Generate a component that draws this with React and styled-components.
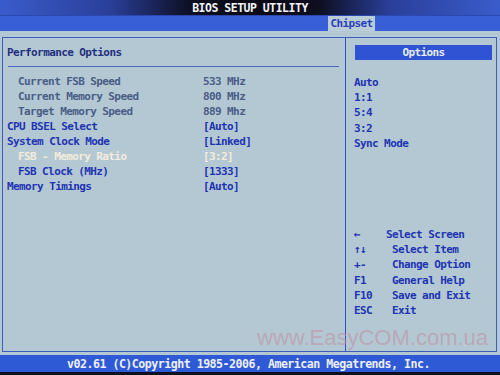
import styled, { createGlobalStyle } from "styled-components"

const GlobalStyle = createGlobalStyle`
  html, body {
    margin: 0;
    padding: 0;
    background: #0c0c18;
  }
`

const settings = [
  { label: "Current FSB Speed", value: "533 MHz", kind: "info", sub: true },
  { label: "Current Memory Speed", value: "800 MHz", kind: "info", sub: true },
  { label: "Target Memory Speed", value: "889 Mhz", kind: "info", sub: true },
  { label: "CPU BSEL Select", value: "[Auto]", kind: "item" },
  { label: "System Clock Mode", value: "[Linked]", kind: "item" },
  { label: "FSB - Memory Ratio", value: "[3:2]", kind: "active", sub: true },
  { label: "FSB Clock (MHz)", value: "[1333]", kind: "item", sub: true },
  { label: "Memory Timings", value: "[Auto]", kind: "item" },
]

const options = ["Auto", "1:1", "5:4", "3:2", "Sync Mode"]

const help = [
  { key: "\u2190", text: "Select Screen", near: true },
  { key: "\u2191\u2193", text: "Select Item" },
  { key: "+-", text: "Change Option" },
  { key: "F1", text: "General Help" },
  { key: "F10", text: "Save and Exit" },
  { key: "ESC", text: "Exit" },
]

const App = () => (
  <>
    <GlobalStyle />
    <Screen>
      <TitleBar>BIOS SETUP UTILITY</TitleBar>
      <TabBar>
        <Tab>Chipset</Tab>
      </TabBar>
      <Body>
        <Frame>
          <LeftPanel>
            <SectionTitle>Performance Options</SectionTitle>
            <Rule />
            <Rows>
              {settings.map((row) => (
                <Row key={row.label} kind={row.kind}>
                  <Label sub={row.sub}>{row.label}</Label>
                  <span>{row.value}</span>
                </Row>
              ))}
            </Rows>
          </LeftPanel>
          <RightPanel>
            <OptionsHeader>Options</OptionsHeader>
            <OptionList>
              {options.map((opt) => (
                <Option key={opt}>{opt}</Option>
              ))}
            </OptionList>
            <HelpList>
              {help.map((h) => (
                <HelpRow key={h.key} near={h.near}>
                  <span>{h.key}</span>
                  <span>{h.text}</span>
                </HelpRow>
              ))}
            </HelpList>
          </RightPanel>
          <Watermark>www.EasyCOM.com.ua</Watermark>
        </Frame>
      </Body>
      <Footer>v02.61 (C)Copyright 1985-2006, American Megatrends, Inc.</Footer>
    </Screen>
  </>
)

export default App

const Screen = styled.div`
  width: 500px;
  height: 375px;
  overflow: hidden;
  display: flex;
  flex-direction: column;
  font-family: "DejaVu Sans Mono", "Liberation Mono", monospace;
  font-weight: 700;
  font-size: 11px;
  letter-spacing: -0.6px;
  background: #b4c8d3;
`
const TitleBar = styled.div`
  height: 15px;
  line-height: 16px;
  text-align: center;
  font-size: 11.5px;
  letter-spacing: -0.5px;
  color: #f4f4f8;
  background: linear-gradient(
    90deg,
    #3a5ccb 0%,
    #2a3f9a 22%,
    #0d0f22 38%,
    #0a0a14 50%,
    #0d0f22 64%,
    #2a3f9a 78%,
    #3a5ccb 100%
  );
`
const TabBar = styled.div`
  height: 16px;
  display: flex;
  background: linear-gradient(180deg, #3a5fd6, #3860d8);
  border-top: 1px solid #2b48b0;
  box-sizing: border-box;
`
const Tab = styled.div`
  margin-left: 328px;
  width: 47px;
  height: 15px;
  line-height: 15px;
  text-align: center;
  color: #2a40b8;
  background: #b9cdd8;
`
const Body = styled.div`
  flex: 1;
  display: flex;
  padding: 6px 3px 3px 2px;
`
const Frame = styled.div`
  position: relative;
  flex: 1;
  display: flex;
  border: 1px solid #3c5cc0;
`
const LeftPanel = styled.div`
  box-sizing: border-box;
  width: 343px;
  border-right: 1px solid #3050c0;
  padding: 7px 0 0 4px;
`
const SectionTitle = styled.div`
  height: 15px;
  line-height: 15px;
  color: #1f2f80;
`
const Rule = styled.div`
  height: 1px;
  margin: 6px 6px 7px 1px;
  background: #4a68c0;
`
const Rows = styled.div`
  display: flex;
  flex-direction: column;
`
const Row = styled.div`
  display: grid;
  grid-template-columns: 196px 1fr;
  height: 15px;
  line-height: 15px;
  color: ${({ kind }) =>
    kind === "info" ? "#4a5d86" : kind === "active" ? "#f3ecdc" : "#1e34b2"};
`
const Label = styled.span`
  padding-left: ${({ sub }) => (sub ? "11px" : "0")};
`
const RightPanel = styled.div`
  flex: 1;
  display: flex;
  flex-direction: column;
  padding: 7px 4px 0 8px;
`
const OptionsHeader = styled.div`
  height: 15px;
  line-height: 15px;
  text-align: center;
  background: #2f53d2;
  color: #e8ecf8;
  margin-left: 1px;
`
const OptionList = styled.div`
  display: flex;
  flex-direction: column;
  margin-top: 15px;
  color: #1e34b2;
  line-height: 15.2px;
`
const Option = styled.div`
  height: 15.2px;
`
const HelpList = styled.div`
  display: flex;
  flex-direction: column;
  margin-top: 76px;
  color: #1e34b2;
`
const HelpRow = styled.div`
  display: grid;
  grid-template-columns: ${({ near }) => (near ? "32px" : "38px")} 1fr;
  height: 15.2px;
  line-height: 15.2px;
`
const Watermark = styled.div`
  position: absolute;
  left: 254px;
  top: 287px;
  font-family: "Liberation Sans", Arial, sans-serif;
  font-weight: 400;
  font-size: 22px;
  letter-spacing: 0;
  color: rgba(190, 140, 160, 0.55);
  pointer-events: none;
`
const Footer = styled.div`
  height: 17px;
  line-height: 18px;
  text-align: center;
  font-size: 11.6px;
  letter-spacing: -0.5px;
  color: #eef0f8;
  background: #2f5ad6;
  border-bottom: 3px solid #0e1020;
  padding-right: 3px;
`
